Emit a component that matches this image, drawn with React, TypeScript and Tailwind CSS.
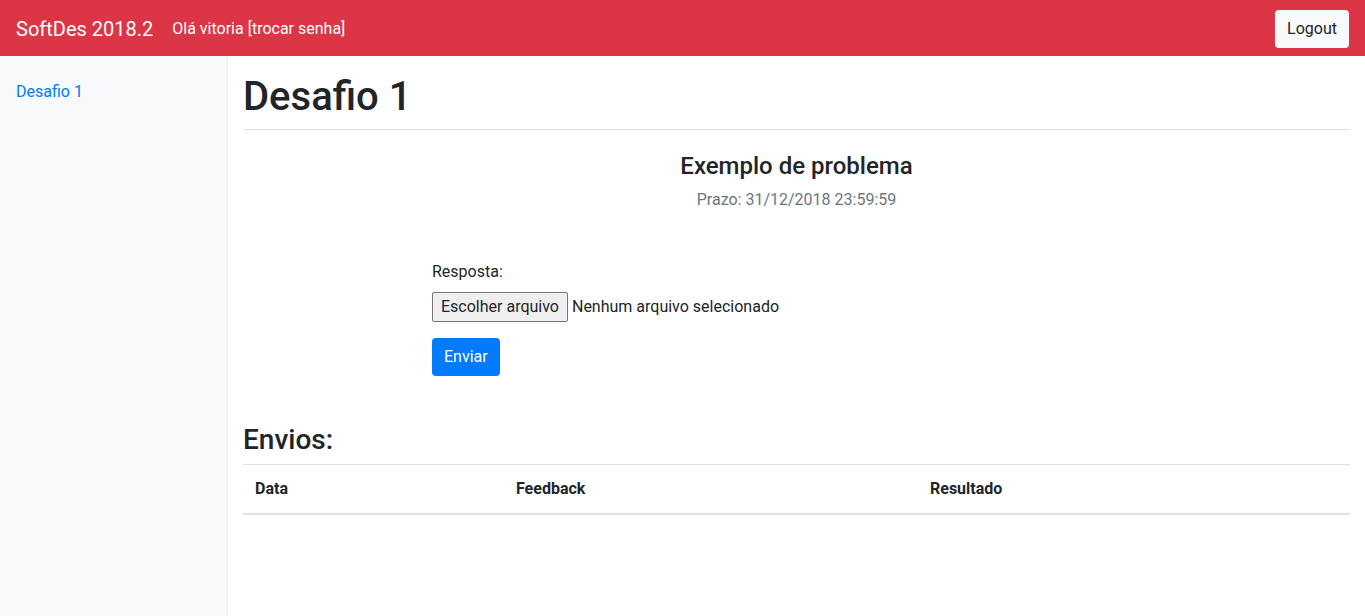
import React from "react";

export default function App() {
  return (
    <div className="flex h-screen flex-col font-['Roboto','Helvetica_Neue',Arial,sans-serif] text-base text-[#212529]">
      {/* Navbar */}
      <nav className="flex h-14 shrink-0 items-center bg-[#dc3545] px-4 pt-px text-white">
        <span className="mr-[19px] text-xl">SoftDes 2018.2</span>
        <span>
          Olá vitoria <a href="#">[trocar senha]</a>
        </span>
        <button className="ml-auto h-[38px] rounded bg-[#f8f9fa] px-3 text-[#212529]">
          Logout
        </button>
      </nav>

      <div className="flex flex-1">
        {/* Sidebar */}
        <aside className="w-[228px] shrink-0 border-r border-[#e9ecef] bg-[#f8f9fa] pt-4">
          <a href="#" className="block px-4 py-2 text-[#007bff]">
            Desafio 1
          </a>
        </aside>

        {/* Conteúdo */}
        <main className="flex-1 px-[15px]">
          <h1 className="mt-[17px] border-b border-[#dee2e6] pb-2 text-[40px] leading-[1.2] font-medium">
            Desafio 1
          </h1>

          <div className="mt-[22px] text-center">
            <h4 className="text-2xl leading-[1.2] font-medium">Exemplo de problema</h4>
            <p className="mt-[7px] text-[#6c757d]">Prazo: 31/12/2018 23:59:59</p>
          </div>

          <form className="mt-12 ml-[189px]">
            <label className="block">Resposta:</label>
            <div className="mt-2 flex h-[30px] items-center">
              <span className="flex h-[30px] items-center rounded-[2px] border border-[#767676] bg-[#efefef] px-2">
                Escolher arquivo
              </span>
              <span className="ml-1">Nenhum arquivo selecionado</span>
            </div>
            <button
              type="button"
              className="mt-4 h-[38px] rounded bg-[#007bff] px-3 text-white"
            >
              Enviar
            </button>
          </form>

          <h3 className="mt-[47px] mb-2 text-[28px] leading-[1.2] font-medium">Envios:</h3>
          <table className="w-full border-collapse">
            <thead>
              <tr>
                <th className="w-[261px] border-t border-b-2 border-[#dee2e6] p-3 text-left font-bold">
                  Data
                </th>
                <th className="w-[414px] border-t border-b-2 border-[#dee2e6] p-3 text-left font-bold">
                  Feedback
                </th>
                <th className="border-t border-b-2 border-[#dee2e6] p-3 text-left font-bold">
                  Resultado
                </th>
              </tr>
            </thead>
            <tbody></tbody>
          </table>
        </main>
      </div>
    </div>
  );
}
